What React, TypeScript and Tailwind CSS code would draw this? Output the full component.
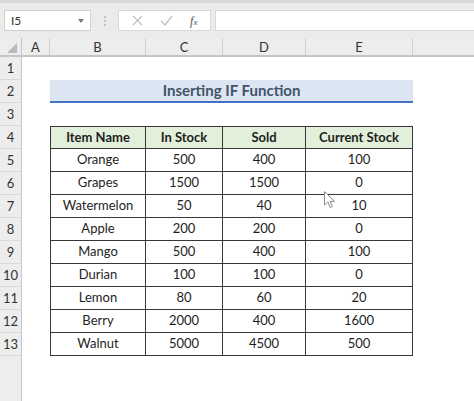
import React from 'react'

const COLS = [
  { key: 'A', w: 'w-[28px]' },
  { key: 'B', w: 'w-[96px]' },
  { key: 'C', w: 'w-[77px]' },
  { key: 'D', w: 'w-[83px]' },
  { key: 'E', w: 'w-[107px]' },
]

const ITEMS: [string, number, number, number][] = [
  ['Orange', 500, 400, 100],
  ['Grapes', 1500, 1500, 0],
  ['Watermelon', 50, 40, 10],
  ['Apple', 200, 200, 0],
  ['Mango', 500, 400, 100],
  ['Durian', 100, 100, 0],
  ['Lemon', 80, 60, 20],
  ['Berry', 2000, 400, 1600],
  ['Walnut', 5000, 4500, 500],
]

const font = { fontFamily: 'Lato, "Open Sans", sans-serif' }

function RowHead({ n }: { n: number }) {
  return (
    <div className="w-[22px] shrink-0 h-full bg-[#ededed] border-r border-[#c6c6c6] border-b border-b-[#dadada] flex items-center justify-center pt-[2px] text-[13px] text-[#333]">
      {n}
    </div>
  )
}

function TableRow({ cells, header, first }: { cells: (string | number)[]; header?: boolean; first?: boolean }) {
  const widths = ['w-[96px]', 'w-[77px]', 'w-[83px]', 'w-[107px]']
  return (
    <div className={`flex h-full ${header ? 'font-bold bg-[#e2efda]' : ''}`}>
      {cells.map((c, i) => (
        <div
          key={i}
          className={`${widths[i]} h-full flex items-center justify-center border-[#383838] border-r border-b ${i === 0 ? 'border-l' : ''} ${first ? 'border-t' : ''} text-[13px] text-[#1e1e1e]`}
        >
          {c}
        </div>
      ))}
    </div>
  )
}

export default function App() {
  const rows: React.ReactNode[] = []
  for (let r = 1; r <= 13; r++) {
    let content: React.ReactNode = null
    if (r === 2) {
      content = (
        <div className="w-[363px] h-[23px] bg-[#dce6f2] border-b-[2px] border-[#4472c4] flex items-center justify-center text-[15px] font-bold text-[#44546a]">
          Inserting IF Function
        </div>
      )
    } else if (r === 4) {
      content = <TableRow header first cells={['Item Name', 'In Stock', 'Sold', 'Current Stock']} />
    } else if (r >= 5) {
      const it = ITEMS[r - 5]
      content = <TableRow cells={it} />
    }
    rows.push(
      <div key={r} className="flex h-[23px] shrink-0">
        <RowHead n={r} />
        <div className="w-[28px] shrink-0" />
        <div className="h-full">{content}</div>
      </div>
    )
  }

  return (
    <div className="relative w-[474px] h-[401px] overflow-hidden bg-white flex flex-col" style={font}>
      {/* formula bar */}
      <div className="h-[38px] shrink-0 bg-[#ebebeb] border-t-[3px] border-[#d9d9d9] flex items-start pt-[7px] pl-[4px]">
        <div className="w-[87px] h-[21px] bg-white border border-[#d2d2d2] flex items-center justify-between pl-[6px] pr-[6px]">
          <span className="text-[12px] text-[#333]">I5</span>
          <span className="w-0 h-0 border-l-[3px] border-r-[3px] border-t-[4px] border-l-transparent border-r-transparent border-t-[#777]" />
        </div>
        <div className="w-[27px] h-[21px] flex flex-col items-center justify-center gap-[2px]">
          <span className="w-[2px] h-[2px] bg-[#c4c4c4]" />
          <span className="w-[2px] h-[2px] bg-[#c4c4c4]" />
          <span className="w-[2px] h-[2px] bg-[#c4c4c4]" />
        </div>
        <div className="w-[93px] h-[21px] bg-white border border-[#d8d8d8] flex items-center justify-around px-[4px]">
          <svg width="11" height="11" viewBox="0 0 11 11">
            <path d="M1 1 L10 10 M10 1 L1 10" stroke="#c3c3c3" strokeWidth="1.4" />
          </svg>
          <svg width="13" height="11" viewBox="0 0 13 11">
            <path d="M1 6 L5 10 L12 1" stroke="#c3c3c3" strokeWidth="1.4" fill="none" />
          </svg>
          <span className="text-[12px] italic text-[#555]" style={{ fontFamily: '"Liberation Serif", serif' }}>
            f<span className="text-[9px]">x</span>
          </span>
        </div>
        <div className="ml-[4px] flex-1 h-[21px] bg-white border border-[#d8d8d8] border-r-0" />
      </div>

      {/* column header */}
      <div className="h-[19px] shrink-0 flex bg-[#ededed] border-b-[2px] border-[#c4c4c4]">
        <div className="w-[22px] shrink-0 h-full relative border-r border-[#c6c6c6]">
          <span className="absolute right-[4px] bottom-[2px] w-0 h-0" style={{ borderBottom: '10px solid #b9b9b9', borderLeft: '10px solid transparent' }} />
        </div>
        {COLS.map(c => (
          <div key={c.key} className={`${c.w} shrink-0 h-full flex items-center justify-center pt-[2px] text-[13px] text-[#333] border-r border-[#d0d0d0]`}>
            {c.key}
          </div>
        ))}
        <div className="flex-1" />
      </div>

      {rows}
      <div className="flex-1 flex">
        <div className="w-[22px] shrink-0 h-full bg-[#ededed] border-r border-[#c6c6c6]" />
      </div>

      {/* mouse pointer */}
      <svg className="absolute left-[324px] top-[191px]" width="12" height="18" viewBox="0 0 12 18">
        <path d="M0.5 0.5 L0.5 14 L3.8 11 L6.2 16.5 L8.3 15.6 L6 10.3 L10.5 10.3 Z" fill="white" stroke="#8a8a8a" strokeWidth="1" />
      </svg>
    </div>
  )
}
